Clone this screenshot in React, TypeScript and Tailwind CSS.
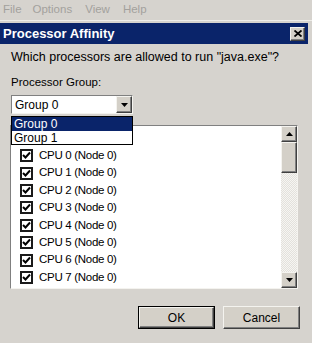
import React from "react";

const Check = () => (
  <div className="w-[13px] h-[13px] border-2 border-[#1a1a1a] bg-white flex items-center justify-center shrink-0">
    <svg width="9" height="9" viewBox="0 0 9 9">
      <path d="M1 4 L3.5 6.5 L8 1.5" stroke="#000" strokeWidth="2" fill="none" />
    </svg>
  </div>
);

const Raised = ({ className, children }: { className?: string; children?: React.ReactNode }) => (
  <div
    className={
      "bg-[#d4d0c8] border border-t-[#f4f3ef] border-l-[#f4f3ef] border-r-[#404040] border-b-[#404040] shadow-[inset_-1px_-1px_0_#808080] flex items-center justify-center " +
      (className || "")
    }
  >
    {children}
  </div>
);

const TriDown = () => (
  <svg width="7" height="4" viewBox="0 0 7 4">
    <path d="M0 0 H7 L3.5 4 Z" fill="#000" />
  </svg>
);
const TriUp = () => (
  <svg width="7" height="4" viewBox="0 0 7 4">
    <path d="M0 4 H7 L3.5 0 Z" fill="#000" />
  </svg>
);

export default function App() {
  const cpus = [0, 1, 2, 3, 4, 5, 6, 7];
  return (
    <div
      className="w-[312px] h-[343px] bg-[#d6d3ce] overflow-hidden relative text-[11px] text-black"
      style={{ fontFamily: '"Liberation Sans", Arial, sans-serif' }}
    >
      {/* menu bar */}
      <div className="h-[21px] flex items-center text-[#a3a19d] text-[11.5px] pl-[3px] border-b border-[#eeede9]">
        <span className="mr-[11px]">File</span>
        <span className="mr-[13px]">Options</span>
        <span className="mr-[13px]">View</span>
        <span>Help</span>
      </div>
      {/* dialog */}
      <div className="mt-[2px] mr-[4px] relative">
        <div className="h-[21px] bg-[#0a246a] flex items-center justify-between pl-[3px] pr-[3px]">
          <span className="text-white font-bold text-[13px]">Processor Affinity</span>
          <Raised className="w-[15px] h-[14px]">
            <svg width="8" height="7" viewBox="0 0 8 7">
              <path d="M0.5 0.5 L7.5 6.5 M7.5 0.5 L0.5 6.5" stroke="#000" strokeWidth="1.8" />
            </svg>
          </Raised>
        </div>
        <div className="pl-[11px] pr-[10px]">
          <div className="mt-[6px] h-[14px] text-[12.5px] leading-[14px]">Which processors are allowed to run "java.exe"?</div>
          <div className="mt-[11px] h-[14px] text-[11.5px] leading-[14px]">Processor Group:</div>
          {/* combobox */}
          <div className="mt-[6px] w-[122px] h-[19px] bg-white border border-t-[#808080] border-l-[#808080] border-r-[#f4f3ef] border-b-[#f4f3ef] flex items-center">
            <span className="pl-[3px] flex-1 text-[12px]">Group 0</span>
            <Raised className="w-[16px] h-[17px]">
              <TriDown />
            </Raised>
          </div>
          {/* listbox */}
          <div className="mt-[11px] -ml-[1px] w-[288px] h-[164px] bg-white border border-t-[#808080] border-l-[#808080] border-r-[#f4f3ef] border-b-[#f4f3ef] flex">
            <div className="flex-1 overflow-hidden pt-[21px] pl-[9px]">
              {cpus.map((c) => (
                <div key={c} className="h-[17.4px] flex items-center">
                  <Check />
                  <span className="ml-[6px] text-[11.5px] tracking-[-0.3px]">CPU {c} (Node 0)</span>
                </div>
              ))}
              <div className="h-[17.4px] flex items-center">
                <Check />
              </div>
            </div>
            <div
              className="w-[16px] flex flex-col"
              style={{
                backgroundColor: "#eceae6",
                backgroundImage:
                  "repeating-conic-gradient(#f6f5f2 0% 25%, #e3e1dc 0% 50%)",
                backgroundSize: "2px 2px",
              }}
            >
              <Raised className="w-[16px] h-[16px]">
                <TriUp />
              </Raised>
              <Raised className="w-[16px] h-[31px]" />
              <div className="flex-1" />
              <Raised className="w-[16px] h-[16px]">
                <TriDown />
              </Raised>
            </div>
          </div>
          {/* buttons */}
          <div className="mt-[17px] flex justify-end gap-[8px] -mr-[2px]">
            <div className="w-[77px] h-[23px] border border-black">
              <Raised className="w-full h-full text-[12px]">OK</Raised>
            </div>
            <Raised className="w-[77px] h-[23px] text-[12px]">Cancel</Raised>
          </div>
        </div>
        {/* dropdown list */}
        <div className="absolute left-[11px] top-[93px] w-[122px] h-[29px] bg-white border border-black text-[12px]">
          <div className="h-[14px] bg-[#0a246a] text-white pl-[2px] leading-[14px]">Group 0</div>
          <div className="h-[13px] pl-[2px] leading-[14px]">Group 1</div>
        </div>
      </div>
    </div>
  );
}
